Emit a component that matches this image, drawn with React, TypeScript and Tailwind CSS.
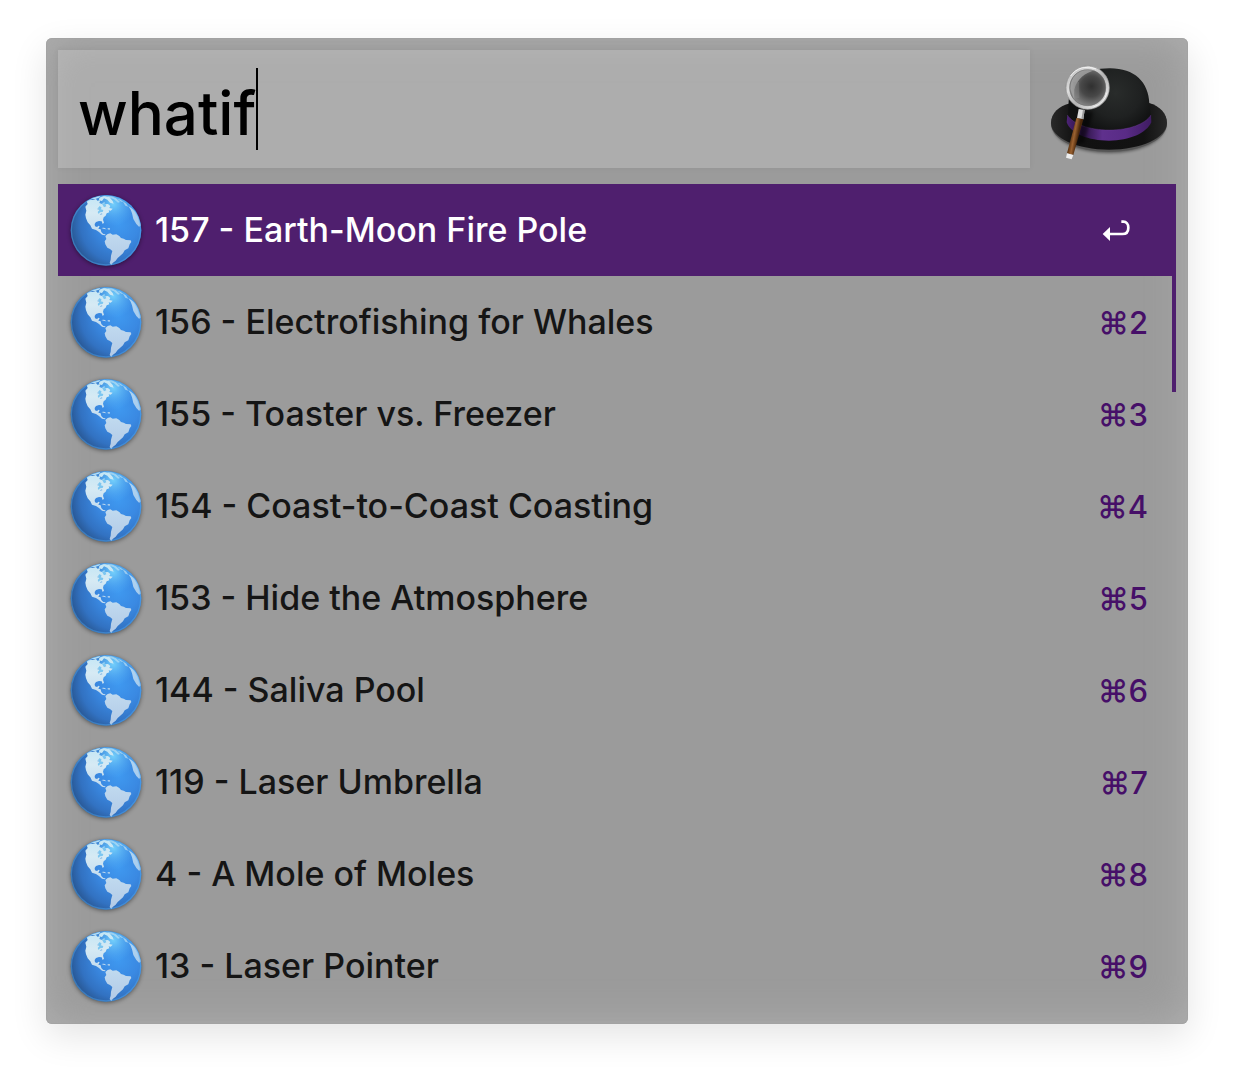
import React from "react";

const results = [
  { title: "157 - Earth-Moon Fire Pole", key: "" },
  { title: "156 - Electrofishing for Whales", key: "⌘2" },
  { title: "155 - Toaster vs. Freezer", key: "⌘3" },
  { title: "154 - Coast-to-Coast Coasting", key: "⌘4" },
  { title: "153 - Hide the Atmosphere", key: "⌘5" },
  { title: "144 - Saliva Pool", key: "⌘6" },
  { title: "119 - Laser Umbrella", key: "⌘7" },
  { title: "4 - A Mole of Moles", key: "⌘8" },
  { title: "13 - Laser Pointer", key: "⌘9" },
];

function GlobeDefs() {
  return (
    <svg className="absolute h-0 w-0" aria-hidden="true">
      <defs>
        <radialGradient id="ocean" gradientUnits="userSpaceOnUse" cx="176" cy="112" r="152">
          <stop offset="0" stopColor="#3f99f0" />
          <stop offset="0.4" stopColor="#3a89e2" />
          <stop offset="0.75" stopColor="#3272c2" />
          <stop offset="1" stopColor="#27538c" />
        </radialGradient>
        <radialGradient id="glow" gradientUnits="userSpaceOnUse" cx="160" cy="52" r="66">
          <stop offset="0" stopColor="#7fdcff" stopOpacity="0.85" />
          <stop offset="1" stopColor="#5ab8ff" stopOpacity="0" />
        </radialGradient>
        <linearGradient id="land" gradientUnits="userSpaceOnUse" x1="0" y1="26" x2="0" y2="236">
          <stop offset="0" stopColor="#c3e6f5" />
          <stop offset="0.25" stopColor="#d6eaf4" />
          <stop offset="0.6" stopColor="#bed8ee" />
          <stop offset="1" stopColor="#b2c9e6" />
        </linearGradient>
        <clipPath id="disc">
          <circle cx="138" cy="131" r="105" />
        </clipPath>
      </defs>
    </svg>
  );
}

function Globe() {
  return (
    <svg viewBox="30 22 216 216" className="size-18 shrink-0 overflow-visible drop-shadow-[0_1px_2px_rgba(0,0,0,0.45)]" aria-hidden="true">
      <circle cx="138" cy="131" r="106" fill="url(#ocean)" />
      <g clipPath="url(#disc)">
        <circle cx="160" cy="52" r="66" fill="url(#glow)" />
        <g fill="url(#land)">
          <path d="M80 43 L88 38 L98 40 L108 37 L112 42 L121 41 L118 49 L126 52 L133 46 L134 53 L144 52 L151 58 L148 64 L158 66 L152 72 L146 71 L148 77 L140 80 L137 87 L131 92 L129 99 L132 108 L128 112 L125 104 L117 103 L108 106 L104 112 L105 119 L111 121 L116 117 L119 119 L115 126 L122 128 L124 136 L130 142 L137 143 L134 146 L126 144 L117 136 L108 130 L96 126 L91 116 L83 107 L78 95 L76 84 L79 72 L76 60 L83 52 Z" />
          <path d="M88 38 L104 28 L122 27 L116 33 L105 37 Z M118 33 L132 27 L148 31 L158 43 L161 51 L150 48 L142 39 L132 35 L126 43 L117 41 Z" />
          <path d="M140 27 L154 28 L168 35 L180 46 L174 48 L162 38 L150 34 Z M172 36 L182 39 L190 46 L184 45 Z M188 44 L198 50 L205 60 L196 57 Z" opacity="0.6" />
          <path d="M205 58 L213 63 L222 70 L235 86 L243 104 L243 117 L237 120 L229 112 L220 97 L216 80 L212 69 Z" opacity="0.75" />
          <path d="M124 124 L132 123 L140 128 L133 127 Z M143 125 L150 125 L149 129 L143 128 Z" />
          <path d="M136 148 L143 142 L151 140 L158 144 L169 143 L178 148 L183 154 L191 156 L198 160 L212 161 L214 166 L209 173 L205 185 L194 191 L189 200 L179 209 L173 214 L167 222 L158 229 L154 236 L149 229 L152 219 L153 207 L157 193 L150 187 L142 183 L136 173 L134 164 L139 157 Z" />
        </g>
        <path fill="#7cc6f0" d="M114 64 L119 58 L125 63 L122 68 L130 70 L128 76 L120 77 L116 82 L113 76 L118 71 Z M126 51 L135 49 L139 59 L132 62 Z" />
        <path fill="#7fb6e6" d="M111 67 L115 65 L117 70 Z M119 84 L124 80 L128 82 L123 84 Z" />
      </g>
      <circle cx="138" cy="131" r="104" fill="none" stroke="#54aef5" strokeOpacity="0.4" strokeWidth="4" />
    </svg>
  );
}

function Hat() {
  return (
    <svg viewBox="48 72 360 288" className="h-24 w-30 overflow-visible" aria-hidden="true">
      <defs>
        <radialGradient id="crown" gradientUnits="userSpaceOnUse" cx="245" cy="155" r="125">
          <stop offset="0" stopColor="#292c2b" />
          <stop offset="0.6" stopColor="#1f2121" />
          <stop offset="1" stopColor="#101111" />
        </radialGradient>
        <linearGradient id="brim" x1="0" y1="0" x2="1" y2="0">
          <stop offset="0" stopColor="#292929" />
          <stop offset="0.2" stopColor="#111" />
          <stop offset="0.8" stopColor="#121212" />
          <stop offset="1" stopColor="#282828" />
        </linearGradient>
        <linearGradient id="band" x1="0" y1="0" x2="1" y2="0">
          <stop offset="0" stopColor="#4d2377" />
          <stop offset="0.18" stopColor="#27113d" />
          <stop offset="0.42" stopColor="#5f308d" />
          <stop offset="0.7" stopColor="#592b86" />
          <stop offset="1" stopColor="#3f1c62" />
        </linearGradient>
        <radialGradient id="lens" gradientUnits="userSpaceOnUse" cx="172" cy="136" r="62">
          <stop offset="0" stopColor="#303030" />
          <stop offset="0.5" stopColor="#484848" />
          <stop offset="1" stopColor="#858585" />
        </radialGradient>
        <linearGradient id="rim" x1="0" y1="0" x2="1" y2="1">
          <stop offset="0" stopColor="#b5b5b5" />
          <stop offset="0.3" stopColor="#dedede" />
          <stop offset="0.55" stopColor="#b4b4b4" />
          <stop offset="0.8" stopColor="#dcdcdc" />
          <stop offset="1" stopColor="#999" />
        </linearGradient>
        <linearGradient id="wood" gradientUnits="userSpaceOnUse" x1="111" y1="282" x2="132" y2="286">
          <stop offset="0" stopColor="#603713" />
          <stop offset="0.45" stopColor="#9b6231" />
          <stop offset="1" stopColor="#4a270b" />
        </linearGradient>
        <filter id="soft" x="-20%" y="-20%" width="140%" height="140%">
          <feGaussianBlur stdDeviation="4" />
        </filter>
      </defs>
      <ellipse cx="225" cy="256" rx="168" ry="80" fill="#000" opacity="0.45" filter="url(#soft)" />
      <path d="M51 248 C51 218 76 197 108 188 L345 187 C377 196 399 220 399 248 C399 296 321 332 225 332 C129 332 51 296 51 248 Z" fill="#555" />
      <path d="M51 246 C51 216 76 195 108 187 L345 186 C377 195 399 218 399 246 C399 291 321 326 225 326 C129 326 51 291 51 246 Z" fill="url(#brim)" />
      <path d="M102 235 L104 180 C109 112 152 83 226 82 C300 81 344 122 346 188 L351 228 C337 252 288 269 225 269 C164 269 116 257 102 235 Z" fill="url(#crown)" />
      <path d="M100 222 C118 250 165 267 226 267 C286 267 334 249 351 222 L352 244 C338 276 287 299 225 299 C163 299 111 279 98 244 Z" fill="url(#band)" />
      <path d="M100 222 C118 250 165 267 226 267 C286 267 334 249 351 222" fill="none" stroke="#75439f" strokeOpacity="0.5" strokeWidth="2" />
      <path d="M154 210 L178 214 L150 305 L126 311 Z" fill="#000" opacity="0.45" filter="url(#soft)" />
      <circle cx="161" cy="140" r="58" fill="url(#lens)" />
      <path d="M109 145 C109 108 131 86 169 82 L184 88 C154 94 128 115 121 146 L121 177 Z" fill="#a8a8a8" opacity="0.75" />
      <path d="M118 122 L135 123 L136 170 L123 173 Z" fill="#909090" opacity="0.35" />
      <circle cx="161" cy="140" r="60" fill="none" stroke="url(#rim)" strokeWidth="11" />
      <circle cx="161" cy="140" r="65" fill="none" stroke="#777" strokeWidth="1.5" />
      <circle cx="161" cy="140" r="54" fill="none" stroke="#686868" strokeWidth="1.5" />
      <path d="M110 105 A61 61 0 0 1 186 84" fill="none" stroke="#f2f2f2" strokeWidth="3" />
      <path d="M178 198 A61 61 0 0 0 219 155" fill="none" stroke="#f2f2f2" strokeWidth="3" />
      <path d="M134 204 L152 207 L148 235 L129 232 Z" fill="#dedede" />
      <path d="M147 206 L152 207 L148 235 L142 234 Z" fill="#9b9b9b" />
      <path d="M127 231 L148 235 L118 342 L99 337 Z" fill="url(#wood)" />
      <path d="M99 337 L118 342 L113 355 L96 350 Z" fill="#eeeeee" />
    </svg>
  );
}

function ReturnIcon() {
  return (
    <svg viewBox="66 120 84 66" className="mt-0.5 mr-[18px] h-[22px] w-7" role="img" aria-label="Return">
      <path d="M124 125 H130 C139 125 145 132 145 143 C145 155 138 162 127 162 H88" fill="none" stroke="#fff" strokeWidth="8" />
      <path d="M68 162 L90 141 V183 Z" fill="#fff" />
    </svg>
  );
}

export default function App() {
  return (
    <main className="min-h-screen bg-white px-[46px] pt-[38px] pb-[54px] font-['Inter','Liberation_Sans',sans-serif]">
      <GlobeDefs />
      <section
        aria-label="Search"
        className="rounded-md bg-[#9b9b9b] p-3 shadow-[0_12px_36px_rgba(0,0,0,0.11),inset_0_0_0_1px_rgba(160,160,160,0.5),inset_0_0_40px_rgba(184,184,184,0.7)]"
      >
        <div className="mb-4 flex items-center">
          <div className="flex h-[118px] flex-1 items-center bg-white/18 pl-5 shadow-[0_0_6px_rgba(0,0,0,0.06)]">
            <input
              aria-label="Query"
              defaultValue="whatif"
              spellCheck={false}
              className="h-[90px] [field-sizing:content] bg-transparent pt-2 text-[60px] font-medium text-black outline-none"
            />
            <span className="h-[82px] w-0.5 bg-black" />
          </div>
          <div className="mt-2 mr-1.5 ml-5">
            <Hat />
          </div>
        </div>
        <div className="relative">
          <ul>
            {results.map((r, i) => (
              <li key={r.title}>
                <button
                  type="button"
                  className={
                    i === 0
                      ? "flex h-[92px] w-full items-center bg-[#4f1f6e] pr-7 pl-3 text-left text-white"
                      : "flex h-[92px] w-full items-center pr-7 pl-3 text-left text-[#151515]"
                  }
                >
                  <Globe />
                  <span className="ml-[13px] flex-1 pb-0.5 text-[34px] font-medium">{r.title}</span>
                  {i === 0 ? <ReturnIcon /> : <kbd className="pt-0.5 font-['Inter','Liberation_Sans',sans-serif] text-[31px] font-medium text-[#460f68]">{r.key}</kbd>}
                </button>
              </li>
            ))}
          </ul>
          <div className="absolute top-0 right-0 h-52 w-1 bg-[#4f1f6e]" />
        </div>
      </section>
    </main>
  );
}
